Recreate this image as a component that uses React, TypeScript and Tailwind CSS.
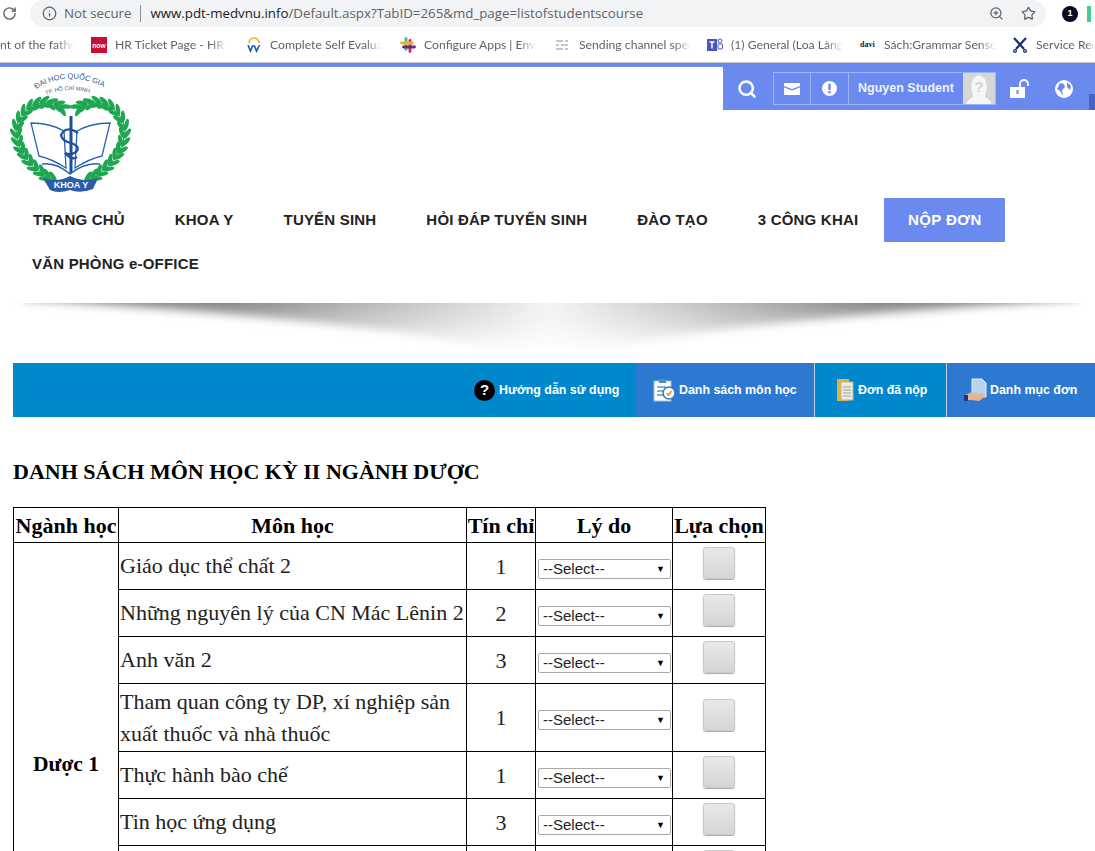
import { RotateCw, Info, ZoomIn, Star, Search } from "lucide-react"

const bookmarks = [
  { width: "w-[155px]", label: "HR Ticket Page - HR Ticket", icon: "now" },
  { width: "w-[154px]", label: "Complete Self Evaluation", icon: "workday" },
  { width: "w-[155px]", label: "Configure Apps | Envato", icon: "slack" },
  { width: "w-[152px]", label: "Sending channel specific", icon: "lines" },
  { width: "w-[153px]", label: "(1) General (Loa Làng) |", icon: "teams" },
  { width: "w-[152px]", label: "Sách:Grammar Sense", icon: "davi" },
  { width: "w-[83px]", label: "Service Request", icon: "cross" },
]

const navItems = ["TRANG CHỦ", "KHOA Y", "TUYỂN SINH", "HỎI ĐÁP TUYỂN SINH", "ĐÀO TẠO", "3 CÔNG KHAI"]

const courses = [
  { name: ["Giáo dục thể chất 2"], credits: 1 },
  { name: ["Những nguyên lý của CN Mác Lênin 2"], credits: 2 },
  { name: ["Anh văn 2"], credits: 3 },
  { name: ["Tham quan công ty DP, xí nghiệp sản", "xuất thuốc và nhà thuốc"], credits: 1 },
  { name: ["Thực hành bào chế"], credits: 1 },
  { name: ["Tin học ứng dụng"], credits: 3 },
  { name: [], credits: null },
  { name: [], credits: null },
  { name: [], credits: null },
]

const BookmarkIcon = ({ type }: { type: string }) => {
  if (type === "now") {
    return <div className="w-4 h-4 bg-[#c8102e] text-white text-[7px] font-bold flex items-center justify-center">now</div>
  }
  if (type === "workday") {
    return (
      <svg width="16" height="16" viewBox="0 0 16 16" fill="none">
        <path d="M3 6a5 5 0 0 1 10 0" stroke="#f5a623" strokeWidth="1.6" />
        <path d="M2 8l2.500 6 2-5 2 0 2 5 3-6" stroke="#0a5cb8" strokeWidth="1.6" />
      </svg>
    )
  }
  if (type === "slack") {
    return (
      <svg width="16" height="16" viewBox="0 0 16 16" strokeWidth="2.800" strokeLinecap="round">
        <path d="M6 1.500v11" stroke="#36c5a0" />
        <path d="M10 3.500v11" stroke="#e01e5a" />
        <path d="M1.500 6h11" stroke="#ecb22e" />
        <path d="M3.500 10h11" stroke="#6a2c70" />
      </svg>
    )
  }
  if (type === "lines") {
    return (
      <svg width="14" height="14" viewBox="0 0 14 14" stroke="#b5b5b5" strokeWidth="1.500">
        <path d="M1 3h7M10 3h3M1 7h3M6 7h7M1 11h7M10 11h3" />
      </svg>
    )
  }
  if (type === "teams") {
    return (
      <svg width="16" height="16" viewBox="0 0 16 16">
        <rect x="0" y="2" width="10" height="12" fill="#4b53bc" />
        <path d="M2.500 5h5M5 5v6.500" stroke="#fff" strokeWidth="1.500" />
        <circle cx="13" cy="4" r="2" fill="none" stroke="#4b53bc" />
        <rect x="11" y="7" width="4.500" height="5" rx="1" fill="none" stroke="#4b53bc" />
      </svg>
    )
  }
  if (type === "davi") {
    return <div className="text-[8px] font-bold text-[#10204a] leading-none [font-family:'Liberation_Serif',serif]">davi</div>
  }
  return (
    <svg width="16" height="16" viewBox="0 0 16 16" stroke="#14306e" strokeWidth="2.200" fill="none">
      <path d="M2 1l10 11M14 1L4 12" />
      <circle cx="3" cy="14" r="1.400" strokeWidth="1.200" />
      <circle cx="13" cy="14" r="1.400" strokeWidth="1.200" />
    </svg>
  )
}

// thân vòng nguyệt quế, từ dưới lên đỉnh
const stem = [
  [56, 116], [50, 113], [44, 110], [38, 105], [32, 100], [27, 94], [23, 88], [19, 81], [17, 73], [16, 65],
  [18, 57], [22, 50], [27, 44], [33, 40], [40, 38], [47, 37], [54, 39], [60, 41],
]

const leaves = stem.flatMap(([x, y], i) => {
  const next = stem[i + 1] ?? [66, 45]
  const angle = Math.atan2(next[1] - y, next[0] - x)
  return [-0.5, 0.5].map((turn) => {
    const a = angle + turn
    return { x: x + Math.cos(a) * 5.5, y: y + Math.sin(a) * 5.5, deg: (a * 180) / Math.PI }
  })
})

const Branch = () => (
  <g>
    <path d={"M" + stem.map(([x, y]) => `${x} ${y}`).join("L")} fill="none" stroke="#1f9a4a" strokeWidth="1" />
    {leaves.map((leaf, i) => (
      <ellipse
        key={i}
        cx={leaf.x}
        cy={leaf.y}
        rx="6"
        ry="2.200"
        fill="#1fa650"
        transform={`rotate(${leaf.deg} ${leaf.x} ${leaf.y})`} />
    ))}
  </g>
)

const Logo = () => (
  <svg width="125" height="125" viewBox="0 0 125 125" className="block">
    <defs>
      <path id="arc-top" d="M36 24 Q70 3 107 24" />
      <path id="arc-sub" d="M46 30 Q70 20 96 30" />
    </defs>
    <g transform="translate(-10 -5)">
      <Branch />
      <g transform="translate(141 0) scale(-1 1)">
        <Branch />
      </g>
      <path d="M31 58 Q50 58 64 66 L66 103 Q52 94 39 91 Z" fill="#fff" stroke="#2a63ad" strokeWidth="1.300" />
      <path d="M110 58 Q91 58 77 66 L75 103 Q89 94 102 91 Z" fill="#fff" stroke="#2a63ad" strokeWidth="1.300" />
      <path d="M42 99 Q56 97 70 109 Q85 97 100 99" fill="none" stroke="#2a63ad" strokeWidth="1.500" />
      <path d="M71 51 V108" stroke="#1e4f9c" strokeWidth="3" />
      <path d="M78 68 Q66 60 61 70 Q62 76 71 78 Q80 81 77 86 Q72 91 65 88 Q72 96 77 92" fill="none" stroke="#1e4f9c" strokeWidth="2.200" />
      <path d="M43 113 Q58 118 70 111 Q84 118 98 113 L93 124 Q80 129 70 125 Q58 129 50 125 Z" fill="#2a5ca8" />
      <text x="71" y="123" textAnchor="middle" fill="#fff" className="[font-family:'Liberation_Sans',sans-serif] font-bold text-[9px]">KHOA Y</text>
      <text fill="#2f5a9a" className="[font-family:'Liberation_Sans',sans-serif] text-[7.500px]">
        <textPath href="#arc-top">ĐẠI HỌC QUỐC GIA</textPath>
      </text>
      <text fill="#2f5a9a" className="[font-family:'Liberation_Sans',sans-serif] text-[5.500px]">
        <textPath href="#arc-sub">TP. HỒ CHÍ MINH</textPath>
      </text>
    </g>
  </svg>
)

const ShadowBand = () => (
  <svg width="1095" height="60" viewBox="0 0 1095 60" className="block">
    <defs>
      <linearGradient id="band" x1="0" x2="1" y1="0" y2="0">
        <stop offset="0" stopColor="#808080" />
        <stop offset="0.2" stopColor="#8c8c8c" />
        <stop offset="0.36" stopColor="#c4c4c4" />
        <stop offset="0.5" stopColor="#f4f4f4" />
        <stop offset="0.64" stopColor="#c4c4c4" />
        <stop offset="0.8" stopColor="#8c8c8c" />
        <stop offset="1" stopColor="#808080" />
      </linearGradient>
      <linearGradient id="fade" x1="0" x2="0" y1="0" y2="1">
        <stop offset="0" stopColor="#fff" />
        <stop offset="0.3" stopColor="#bbb" />
        <stop offset="0.85" stopColor="#000" />
      </linearGradient>
      <mask id="band-mask">
        <rect width="1095" height="60" fill="url(#fade)" />
      </mask>
      <filter id="soft" x="-5%" y="-30%" width="110%" height="160%">
        <feGaussianBlur stdDeviation="5" />
      </filter>
    </defs>
    <g mask="url(#band-mask)">
      <path d="M24 -12 L1078 -12 L1078 -4 Q800 14 670 35 Q550 64 430 35 Q300 14 24 -4 Z" fill="url(#band)" filter="url(#soft)" />
    </g>
  </svg>
)

const App = () => {
  return (
    <div className="h-[851px] overflow-hidden bg-white [font-family:'Liberation_Sans',sans-serif]">
      {/* thanh địa chỉ */}
      <div className="h-[27px] bg-white flex items-center relative">
        <RotateCw size={15} className="ml-[2px] shrink-0 text-[#5f6368]" strokeWidth={2.200} />
        <div className="ml-[13px] w-[1016px] h-[27px] shrink-0 bg-[#f1f3f4] rounded-full flex items-center pl-[12px] pr-[10px] text-[13.300px] [font-family:'Open_Sans',sans-serif]">
          <Info size={15} className="text-[#5f6368]" />
          <span className="ml-[7px] text-[#5f6368]">Not secure</span>
          <span className="mx-[9px] h-[17px] w-px bg-[#8d9094]"></span>
          <span className="text-[#202124]">www.pdt-medvnu.info</span>
          <span className="text-[#5f6368]">/Default.aspx?TabID=265&amp;md_page=listofstudentscourse</span>
          <ZoomIn size={15} className="ml-auto text-[#5f6368]" />
          <Star size={15} className="ml-[17px] text-[#5f6368]" />
        </div>
        <div className="ml-[16px] w-4 h-4 shrink-0 rounded-full bg-[#0b0b1e] text-white text-[9px] font-bold flex items-center justify-center">1</div>
        <div className="ml-[9px] w-1 h-4 shrink-0 bg-[#3ecf8e]"></div>
      </div>

      {/* bookmark */}
      <div className="h-[36px] pt-[1px] bg-white flex items-center text-[12.200px] text-[#5f6368] whitespace-nowrap [font-family:Lato,sans-serif] border-b border-[#c9c9c9]">
        <div className="w-[91px] shrink-0 overflow-hidden">
          <div className="w-[74px] overflow-hidden [mask-image:linear-gradient(to_right,black_75%,transparent)]">nt of the father</div>
        </div>
        {bookmarks.map((item) => (
          <div key={item.label} className={`${item.width} flex items-center shrink-0`}>
            <div className="w-[18px] flex items-center shrink-0">
              <BookmarkIcon type={item.icon} />
            </div>
            <div className="ml-[6px] w-[112px] overflow-hidden [mask-image:linear-gradient(to_right,black_85%,transparent)]">{item.label}</div>
          </div>
        ))}
      </div>

      <div className="h-[4px] bg-[#6a8af0]"></div>

      {/* header */}
      <div className="h-[131px] flex justify-between items-start">
        <div className="ml-[10px] mt-[3px]">
          <Logo />
        </div>
        <div className="w-[372px] h-[43px] bg-[#6a8af0] flex items-center text-white relative">
          <Search size={20} strokeWidth={3} className="ml-[14px]" />
          <div className="ml-[16px] h-[33px] w-[223px] border border-[#9db3f7] flex items-center">
            <div className="w-[37px] h-full flex items-center justify-center border-r border-[#9db3f7]">
              <svg width="16" height="12" viewBox="0 0 16 12" fill="#fff">
                <path d="M0 0h16v3L8 6 0 3z" />
                <path d="M0 4.500L8 7.500l8-3V12H0z" />
              </svg>
            </div>
            <div className="w-[38px] h-full flex items-center justify-center border-r border-[#9db3f7]">
              <svg width="15" height="15" viewBox="0 0 15 15">
                <circle cx="7.500" cy="7.500" r="7.500" fill="#fff" />
                <rect x="6.300" y="3" width="2.400" height="6" fill="#6a8af0" />
                <rect x="6.300" y="10" width="2.400" height="2.400" fill="#6a8af0" />
              </svg>
            </div>
            <div className="pl-[9px] text-[12.500px] font-bold text-[#eef2ff] flex-1 -mt-[1px]">Nguyen Student</div>
            <div className="w-[32px] h-full bg-[#d6d6d2] flex items-center justify-center">
              <svg width="30" height="31" viewBox="0 0 30 31" fill="none">
                <path d="M3 31c1-4 5-6 7-7 0-2-2-5-2-10C8 7 11 3 15 3s7 4 7 11c0 5-2 8-2 10 2 1 6 3 7 7" fill="#f6f6f6" stroke="#fff" />
                <text x="15" y="19" textAnchor="middle" fill="#d2d2d2" className="text-[15px] font-bold">?</text>
              </svg>
            </div>
          </div>
          <svg width="20" height="19" viewBox="0 0 20 19" className="ml-[14px]" fill="#fff">
            <rect x="0" y="8" width="15" height="11" />
            <path d="M10 8V5a4 4 0 0 1 8 0v2" fill="none" stroke="#fff" strokeWidth="1.800" />
            <rect x="6.500" y="11" width="2" height="4" fill="#6a8af0" />
          </svg>
          <svg width="18" height="18" viewBox="0 0 18 18" className="ml-[25px]">
            <circle cx="9" cy="9" r="9" fill="#fff" />
            <path d="M5 3l4 1 1 3-3 3 1 6-3-5-3-2zM12 2l4 4-1 4-3-3z" fill="#6a8af0" />
          </svg>
          <div className="absolute right-0 bottom-0 w-[6px] h-[16px] bg-[#4763c4]"></div>
        </div>
      </div>

      {/* menu */}
      <div className="ml-[8px] flex flex-wrap text-[15px] font-bold text-[#222] tracking-[0.2px]">
        {navItems.map((item) => (
          <div key={item} className="h-[44px] px-[25px] flex items-center">
            {item}
          </div>
        ))}
        <div className="ml-px h-[44px] w-[121px] flex items-center justify-center bg-[#6a8af0] text-white tracking-[0.4px]">NỘP ĐƠN</div>
        <div className="h-[44px] px-[24px] flex items-center">VĂN PHÒNG e-OFFICE</div>
      </div>

      <div className="mt-[17px]">
        <ShadowBand />
      </div>

      {/* tab bar */}
      <div className="ml-[13px] h-[54px] bg-[#0088cc] flex justify-end text-white text-[12.400px] font-bold">
        <div className="h-full w-[162px] flex items-center">
          <div className="w-[21px] h-[21px] rounded-full bg-black flex items-center justify-center text-[15px] font-bold">?</div>
          <span className="ml-[4px]">Hướng dẫn sử dụng</span>
        </div>
        <div className="h-full w-[179px] bg-[#2d78d0] flex items-center pl-[17px] border-r border-[#b8d4ea]">
          <svg width="24" height="24" viewBox="0 0 24 24" className="mr-[2px]">
            <rect x="1" y="3" width="17" height="20" fill="#fff" stroke="#9cc3dd" />
            <rect x="6" y="1" width="7" height="4" fill="#4a90c0" />
            <path d="M4 9h9M4 13h6M4 17h6" stroke="#5e9ac4" strokeWidth="1.500" />
            <circle cx="16" cy="15" r="6" fill="#fff" stroke="#3a7cae" strokeWidth="1.500" />
            <path d="M13.500 15l2 2 3-4" fill="none" stroke="#e8941c" strokeWidth="1.500" />
          </svg>
          Danh sách môn học
        </div>
        <div className="h-full w-[132px] flex items-center pl-[21px] border-r border-[#b8d4ea]">
          <svg width="18" height="24" viewBox="0 0 18 24" className="mr-[4px]">
            <rect x="1" y="1" width="12" height="22" fill="#e3b23c" />
            <rect x="5" y="4" width="12" height="18" fill="#efece0" stroke="#b9b39a" />
            <path d="M7 9h8M7 12h8M7 15h8M7 18h8" stroke="#9d9d9d" />
          </svg>
          Đơn đã nộp
        </div>
        <div className="h-full w-[148px] bg-[#2d78d0] flex items-center pl-[17px]">
          <svg width="23" height="24" viewBox="0 0 23 24" className="mr-[3px]">
            <path d="M8 1h10l4 4v14H8z" fill="#b7d3ee" stroke="#e6f0fa" />
            <path d="M1 17l7-3 5 2 5-1 4 3-7 5-8-1-6 0z" fill="#e6b58c" />
            <rect x="0" y="17" width="4" height="6" fill="#1f3a73" />
          </svg>
          Danh mục đơn
        </div>
      </div>

      {/* nội dung */}
      <h2 className="ml-[13px] mt-[41px] h-[27px] text-[22px] leading-[27px] font-bold text-black [font-family:'Liberation_Serif',serif]">
        DANH SÁCH MÔN HỌC KỲ II NGÀNH DƯỢC
      </h2>

      <table className="ml-[13px] mt-[22px] w-[753px] table-fixed border-collapse text-[22px] text-[#222] [font-family:'Liberation_Serif',serif]">
        <colgroup>
          <col className="w-[105px]" />
          <col className="w-[348px]" />
          <col className="w-[69px]" />
          <col className="w-[137px]" />
          <col className="w-[93px]" />
        </colgroup>
        <thead>
          <tr className="h-[35px] font-bold text-black leading-[30px]">
            <th className="border border-black whitespace-nowrap font-bold px-0 pt-[1px]">Ngành học</th>
            <th className="border border-black font-bold pt-[1px]">Môn học</th>
            <th className="border border-black whitespace-nowrap font-bold pt-[1px]">Tín chỉ</th>
            <th className="border border-black font-bold pt-[1px]">Lý do</th>
            <th className="border border-black whitespace-nowrap font-bold pt-[1px]">Lựa chọn</th>
          </tr>
        </thead>
        <tbody>
          {courses.map((course, i) => (
            <tr key={i} className={course.name.length > 1 ? "h-[68px]" : "h-[47px]"}>
              {i === 0 && (
                <td rowSpan={courses.length} className="border border-black text-center font-bold text-[21.500px] text-black">
                  Dược 1
                </td>
              )}
              <td className="border border-black pl-[1px] leading-[32px] whitespace-nowrap">
                {course.name.map((line) => (
                  <div key={line}>{line}</div>
                ))}
              </td>
              <td className="border border-black text-center">{course.credits}</td>
              <td className="border border-black pl-[2px] pr-[1px]">
                <div className="relative h-[20px] mt-[5px]">
                  <select className="block appearance-none w-full h-full bg-white border border-[#a9a9a9] rounded-[2px] pl-[4px] text-[15px] leading-[16px] text-[#222] [font-family:'Liberation_Sans',sans-serif]">
                    <option>--Select--</option>
                  </select>
                  <span className="absolute right-[6px] top-[4px] text-[9px] leading-[12px] text-black pointer-events-none">▼</span>
                </div>
              </td>
              <td className="border border-black text-center">
                <input
                  type="checkbox"
                  className="appearance-none block mx-auto -mt-[6px] w-[32px] h-[32px] rounded-[3px] border border-[#c9c9c9] bg-gradient-to-b from-[#e9e9e9] to-[#d5d5d5] shadow-[0_1px_1px_#aaa]" />
              </td>
            </tr>
          ))}
        </tbody>
      </table>
    </div>
  )
}

export default App
